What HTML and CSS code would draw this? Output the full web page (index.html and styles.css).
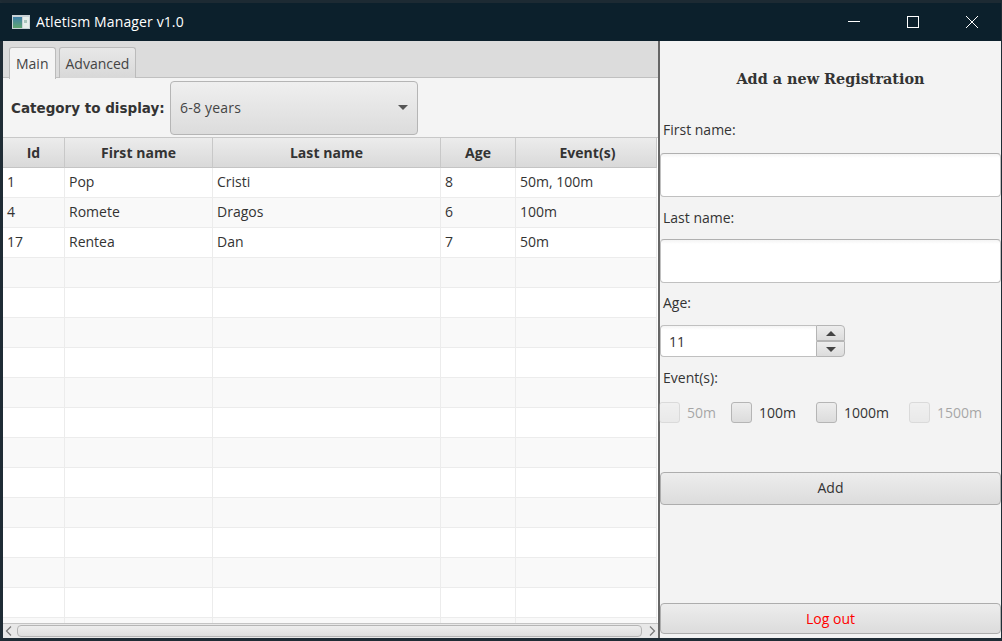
FILE: index.html
```html
<!DOCTYPE html>
<html>
  <head>
    <title>Atletism Manager v1.0</title>
    <meta charset="utf-8">
    <link rel="stylesheet" href="styles.css">
  </head>
  <body>
    <div class="window">
      <div class="titlebar">
        <svg class="app-icon" width="18" height="14" viewBox="0 0 18 14">
          <defs>
            <linearGradient id="pane" x1="0" y1="0" x2="0" y2="1">
              <stop offset="0" stop-color="#3f7fa8"/>
              <stop offset="1" stop-color="#5fa56f"/>
            </linearGradient>
          </defs>
          <rect width="18" height="14" fill="#c9d2d6"/>
          <rect x="1" y="2" width="9" height="11" fill="url(#pane)"/>
          <rect x="11" y="2" width="6" height="11" fill="#e6eeea"/>
          <rect x="12" y="5" width="3" height="3" fill="#a9c4bb"/>
        </svg>
        <span class="title">Atletism Manager v1.0</span>
        <div class="win-controls">
          <svg class="win-btn" width="14" height="14" viewBox="0 0 14 14"><path d="M1 6.5H13" stroke="#fff" fill="none"/></svg>
          <svg class="win-btn" width="14" height="14" viewBox="0 0 14 14"><rect x="1.5" y="1.5" width="11" height="11" stroke="#fff" fill="none"/></svg>
          <svg class="win-btn" width="14" height="14" viewBox="0 0 14 14"><path d="M1 1L13 13M13 1L1 13" stroke="#fff" fill="none"/></svg>
        </div>
      </div>

      <div class="content">
        <div class="left">
          <div class="tabs">
            <div class="tab active">Main</div>
            <div class="tab">Advanced</div>
          </div>

          <div class="filter">
            <label class="filter-label">Category to display:</label>
            <div class="combo">
              <span>6-8 years</span>
              <i class="combo-arrow"></i>
            </div>
          </div>

          <div class="table-wrap">
            <table class="grid">
              <colgroup>
                <col class="col-id">
                <col class="col-first">
                <col class="col-last">
                <col class="col-age">
                <col class="col-events">
              </colgroup>
              <thead>
                <tr>
                  <th>Id</th>
                  <th>First name</th>
                  <th>Last name</th>
                  <th>Age</th>
                  <th>Event(s)</th>
                </tr>
              </thead>
              <tbody>
                <tr><td>1</td><td>Pop</td><td>Cristi</td><td>8</td><td>50m, 100m</td></tr>
                <tr><td>4</td><td>Romete</td><td>Dragos</td><td>6</td><td>100m</td></tr>
                <tr><td>17</td><td>Rentea</td><td>Dan</td><td>7</td><td>50m</td></tr>
                <tr><td></td><td></td><td></td><td></td><td></td></tr>
                <tr><td></td><td></td><td></td><td></td><td></td></tr>
                <tr><td></td><td></td><td></td><td></td><td></td></tr>
                <tr><td></td><td></td><td></td><td></td><td></td></tr>
                <tr><td></td><td></td><td></td><td></td><td></td></tr>
                <tr><td></td><td></td><td></td><td></td><td></td></tr>
                <tr><td></td><td></td><td></td><td></td><td></td></tr>
                <tr><td></td><td></td><td></td><td></td><td></td></tr>
                <tr><td></td><td></td><td></td><td></td><td></td></tr>
                <tr><td></td><td></td><td></td><td></td><td></td></tr>
                <tr><td></td><td></td><td></td><td></td><td></td></tr>
                <tr><td></td><td></td><td></td><td></td><td></td></tr>
                <tr><td></td><td></td><td></td><td></td><td></td></tr>
              </tbody>
            </table>
          </div>

          <div class="scrollbar">
            <svg width="7" height="10" viewBox="0 0 7 10"><path d="M6 0.5L1.5 5L6 9.5" stroke="#777" stroke-width="1.2" fill="none"/></svg>
            <div class="thumb"></div>
            <svg width="7" height="10" viewBox="0 0 7 10"><path d="M1 0.5L5.5 5L1 9.5" stroke="#777" stroke-width="1.2" fill="none"/></svg>
          </div>
        </div>

        <div class="right">
          <h2>Add a new Registration</h2>

          <label class="field-label first-label">First name:</label>
          <input class="text-input first-input" type="text">

          <label class="field-label last-label">Last name:</label>
          <input class="text-input last-input" type="text">

          <label class="field-label age-label">Age:</label>
          <div class="spinner">
            <input class="spinner-input" type="text" value="11">
            <div class="spinner-btns">
              <div class="spin up"><i></i></div>
              <div class="spin down"><i></i></div>
            </div>
          </div>

          <label class="field-label events-label">Event(s):</label>
          <div class="events">
            <label class="check disabled check-50"><input type="checkbox" disabled>50m</label>
            <label class="check check-100"><input type="checkbox">100m</label>
            <label class="check check-1000"><input type="checkbox">1000m</label>
            <label class="check disabled check-1500"><input type="checkbox" disabled>1500m</label>
          </div>

          <button class="btn add">Add</button>
          <button class="btn logout">Log out</button>
        </div>
      </div>
    </div>
  </body>
</html>
```

FILE: styles.css
```css
html, body {
    height: 100%;
}

body {
    margin: 0;
    overflow: hidden;

    font-family: "Open Sans", "Noto Sans", sans-serif;
    font-size: 14px;
    color: #333;

    background: #1c2730;
}

.window {
    box-sizing: border-box;
    height: 641px;
    display: flex;
    flex-direction: column;

    border-top: 3px solid #1d2a33;
    border-left: 3px solid #1f2c35;
    border-right: 1px solid #1f2c35;
    border-bottom: 3px solid #1f2c35;
}

/* title bar */

.titlebar {
    box-sizing: border-box;
    height: 38px;
    margin-left: -3px;
    padding: 0 0 1px 12px;
    display: flex;
    align-items: center;
    flex-shrink: 0;

    color: #fff;
    background: #0c202c;
}

.app-icon {
    margin-right: 6px;
}

.title {
    font-size: 14px;
    letter-spacing: 0.12px;
}

.win-controls {
    margin-left: auto;
    margin-right: 22px;
    display: flex;
    gap: 45px;
}

.win-btn {
    display: block;
}

/* main area */

.content {
    flex: 1;
    display: flex;
    min-height: 0;
}

.left {
    width: 655px;
    display: flex;
    flex-direction: column;
    flex-shrink: 0;

    background: #f4f4f4;
    border-right: 2px solid #666;
}

.tabs {
    height: 37px;
    box-sizing: border-box;
    padding: 6px 0 0 6px;
    display: flex;
    gap: 3px;

    background: #dcdcdc;
    border-bottom: 1px solid #c0c0c0;
}

.tab {
    height: 30px;
    padding: 0 6px;
    display: flex;
    align-items: center;

    border: 1px solid #bbb;
    border-bottom: none;
    border-radius: 3px 3px 0 0;

    color: #444;
    background: linear-gradient(#e8e8e8, #d8d8d8);
}

.tab.active {
    height: 31px;
    background: #f4f4f4;
}

.filter {
    box-sizing: border-box;
    height: 59px;
    padding: 1px 8px 0 8px;
    display: flex;
    align-items: center;
    flex-shrink: 0;
}

.filter-label {
    width: 159px;
    font-family: "DejaVu Sans", sans-serif;
    font-size: 13.5px;
    font-weight: 700;
}

.combo {
    box-sizing: border-box;
    width: 248px;
    height: 54px;
    padding: 0 9px 2px 9px;
    display: flex;
    align-items: center;
    justify-content: space-between;

    border: 1px solid #b5b5b5;
    border-radius: 4px;

    letter-spacing: 0.2px;
    color: #444;
    background: linear-gradient(#efefef, #dcdcdc);
}

.combo-arrow {
    width: 0;
    height: 0;

    border-left: 5px solid transparent;
    border-right: 5px solid transparent;
    border-top: 5px solid #555;
}

.table-wrap {
    flex: 1;
    min-height: 0;
    overflow: hidden;

    background: #fff;
    border-top: 1px solid #c8c8c8;
}

.grid {
    width: 654px;
    table-layout: fixed;
    border-collapse: separate;
    border-spacing: 0;
}

.col-id { width: 62px; }
.col-first { width: 148px; }
.col-last { width: 228px; }
.col-age { width: 75px; }
.col-events { width: 141px; }

.grid th {
    box-sizing: border-box;
    height: 30px;
    padding: 0;

    font-weight: 700;
    letter-spacing: 0.05px;
    text-align: center;

    background: linear-gradient(#ececec, #d9d9d9);
    border-right: 1px solid #c8c8c8;
    border-bottom: 1px solid #c4c4c4;
}

.grid th:last-child {
    padding-left: 3px;
}

.grid td {
    box-sizing: border-box;
    height: 30px;
    padding: 0 0 2px 4px;

    background: #fff;
    border-right: 1px solid #ececec;
    border-bottom: 1px solid #ececec;
}

.grid tbody tr:nth-child(even) td {
    background: #f9f9f9;
}

.scrollbar {
    box-sizing: border-box;
    height: 15px;
    padding: 0 0 0 2px;
    display: flex;
    align-items: center;
    flex-shrink: 0;

    background: #e8e8e8;
    border-top: 1px solid #c4c4c4;
}

.thumb {
    box-sizing: border-box;
    width: 625px;
    height: 12px;
    margin: 0 7px 0 5px;

    border: 1px solid #b5b5b5;
    border-radius: 4px;
    background: linear-gradient(#ededed, #dedede);
}

/* registration form */

.right {
    flex: 1;
    display: flex;
    flex-direction: column;
    min-width: 0;

    background: #f3f3f3;
}

.right h2 {
    margin: 26px 0 0 0;

    font-family: "DejaVu Serif", serif;
    font-size: 14.4px;
    font-weight: 700;
    line-height: 24px;
    text-align: center;
    color: #333;
}

.field-label {
    margin-left: 3px;
    line-height: 20px;
}

.first-label { margin-top: 29px; }
.last-label { margin-top: 11px; }
.age-label { margin-top: 10px; }
.events-label { margin-top: 11px; }

.text-input {
    box-sizing: border-box;
    width: 100%;
    height: 44px;
    padding: 0 8px;

    border: 1px solid #c0c0c0;
    border-top-color: #b0b0b0;
    border-radius: 4px;
    outline: 0;

    background: linear-gradient(#f4f4f4, #fff 4px);
}

.first-input { margin-top: 13px; }
.last-input { margin-top: 11px; }

.spinner {
    width: 185px;
    height: 32px;
    margin-top: 12px;
    display: flex;
}

.spinner-input {
    box-sizing: border-box;
    width: 156px;
    height: 32px;
    padding: 0 8px;

    border: 1px solid #c0c0c0;
    border-right: none;
    border-radius: 4px 0 0 4px;
    outline: 0;

    font-family: inherit;
    font-size: 14px;
    color: #333;
    background: linear-gradient(#f4f4f4, #fff 4px);
}

.spinner-btns {
    flex: 1;
    display: flex;
    flex-direction: column;
}

.spin {
    box-sizing: border-box;
    height: 16px;
    display: flex;
    align-items: center;
    justify-content: center;

    border: 1px solid #b5b5b5;
    background: linear-gradient(#ededed, #dcdcdc);
}

.spin.up {
    border-radius: 0 4px 0 0;
}

.spin.down {
    border-radius: 0 0 4px 0;
}

.spin i {
    width: 0;
    height: 0;
    border-left: 5px solid transparent;
    border-right: 5px solid transparent;
}

.spin.up i {
    border-bottom: 5px solid #444;
}

.spin.down i {
    border-top: 5px solid #444;
}

.events {
    height: 22px;
    margin: 13px 0 0 -1px;
    display: flex;
    align-items: center;
}

.check {
    display: flex;
    align-items: center;
    gap: 7px;
}

.check input {
    appearance: none;
    box-sizing: border-box;
    width: 21px;
    height: 21px;
    margin: 0;

    border: 1px solid #b5b5b5;
    border-radius: 3px;
    background: linear-gradient(#ededed, #dcdcdc);
}

.check.disabled {
    opacity: 0.4;
}

.check-100 { margin-left: 15px; }
.check-1000 { margin-left: 20px; }
.check-1500 { margin-left: 20px; }

.btn {
    box-sizing: border-box;
    width: 100%;
    height: 33px;

    border: 1px solid #adadad;
    border-radius: 4px;

    font-family: inherit;
    font-size: 14px;
    color: #333;
    background: linear-gradient(#ededed, #dcdcdc);
}

.add {
    margin-top: 49px;
    padding-bottom: 3px;
}

.logout {
    height: 31px;
    margin-top: auto;
    margin-bottom: 4px;
    color: #f00;
}
```
